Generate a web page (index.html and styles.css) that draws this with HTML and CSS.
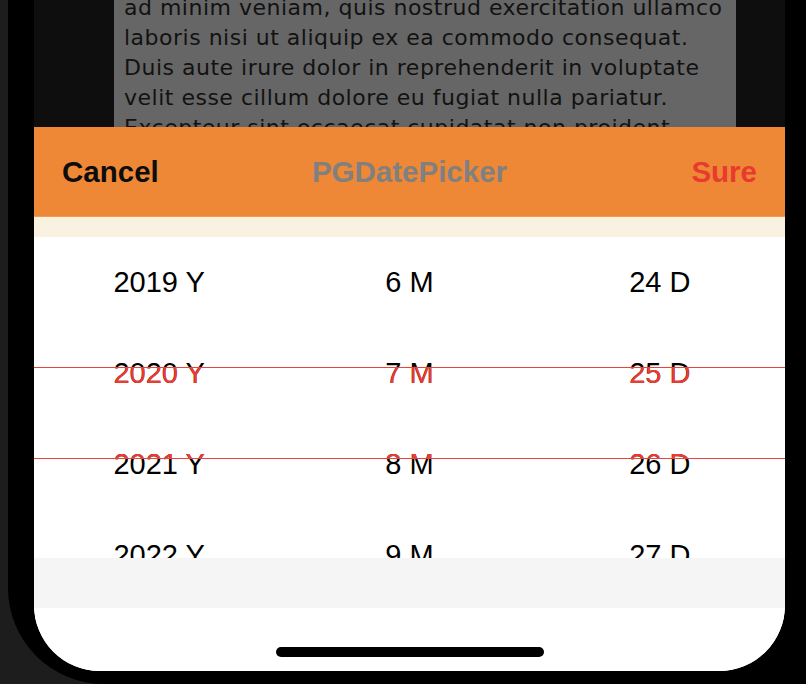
FILE: index.html
```html
<!DOCTYPE html>
<html>
<head>
<meta charset="utf-8">
<link rel="stylesheet" href="styles.css">
</head>
<body>
<div class="device">
  <div class="screen">
    <div class="backdrop">
      <div class="content">
        <p class="lorem">
          <span class="line">ad minim veniam, quis nostrud exercitation ullamco</span>
          <span class="line">laboris nisi ut aliquip ex ea commodo consequat.</span>
          <span class="line">Duis aute irure dolor in reprehenderit in voluptate</span>
          <span class="line">velit esse cillum dolore eu fugiat nulla pariatur.</span>
          <span class="line">Excepteur sint occaecat cupidatat non proident,</span>
        </p>
      </div>
    </div>
    <div class="sheet">
      <div class="toolbar">
        <span class="btn cancel">Cancel</span>
        <span class="title">PGDatePicker</span>
        <span class="btn sure">Sure</span>
      </div>
      <div class="cream"></div>
      <div class="picker">
        <div class="rows">
          <div class="row"><span>2019 Y</span><span>6 M</span><span>24 D</span></div>
          <div class="row"><span>2020 Y</span><span>7 M</span><span>25 D</span></div>
          <div class="row"><span>2021 Y</span><span>8 M</span><span>26 D</span></div>
          <div class="row"><span>2022 Y</span><span>9 M</span><span>27 D</span></div>
        </div>
        <div class="band">
          <div class="rows rows-sel">
            <div class="row"><span>2019 Y</span><span>6 M</span><span>24 D</span></div>
            <div class="row"><span>2020 Y</span><span>7 M</span><span>25 D</span></div>
            <div class="row"><span>2021 Y</span><span>8 M</span><span>26 D</span></div>
            <div class="row"><span>2022 Y</span><span>9 M</span><span>27 D</span></div>
          </div>
        </div>
      </div>
      <div class="graystrip"></div>
      <div class="footer"><div class="home"></div></div>
    </div>
  </div>
</div>
</body>
</html>
```
FILE: styles.css
```css
* { box-sizing: border-box; }
html, body { margin: 0; padding: 0; }
body {
  width: 806px;
  height: 684px;
  overflow: hidden;
  background: #1d1d1d;
  font-family: "Liberation Sans", Arial, sans-serif;
}
.device {
  margin-left: 8px;
  height: 684px;
  background: #000;
  border-bottom-left-radius: 96px;
  padding-left: 26px;
  padding-right: 21px;
}
.screen {
  height: 671px;
  width: 751px;
  border-bottom-left-radius: 66px;
  border-bottom-right-radius: 66px;
  overflow: hidden;
  background: #fff;
  display: flex;
  flex-direction: column;
}
.backdrop {
  height: 127px;
  background: #0e0e0e;
  padding-left: 80px;
  padding-right: 49px;
  overflow: hidden;
}
.content {
  height: 127px;
  background: #666666;
  padding: 0 10px;
  overflow: hidden;
}
.lorem {
  margin: -7px 0 0 0;
  font-family: "DejaVu Sans", "Liberation Sans", sans-serif;
  font-size: 22px;
  line-height: 30px;
  letter-spacing: 0.5px;
  color: #121212;
}
.line {
  display: block;
  white-space: nowrap;
}
.sheet {
  flex: 1;
  display: flex;
  flex-direction: column;
}
.toolbar {
  height: 90px;
  background: #ee8836;
  border-bottom: 1px solid #f29a52;
  display: flex;
  align-items: center;
  justify-content: space-between;
  padding: 0 28px 0 28px;
  font-weight: bold;
  font-size: 29.5px;
  position: relative;
}
.cancel { color: #0d0d0d; }
.sure { color: #e83a2f; }
.title {
  color: #808080;
  position: absolute;
  left: 0;
  right: 0;
  text-align: center;
  pointer-events: none;
}
.cream {
  height: 20px;
  background: #faf2e1;
}
.picker {
  height: 321px;
  background: #fff;
  position: relative;
  overflow: hidden;
}
.rows { color: #000; }
.row {
  height: 91px;
  display: grid;
  grid-template-columns: 1fr 1fr 1fr;
  align-items: center;
  text-align: center;
  font-size: 29px;
  line-height: 91px;
}
.band {
  position: absolute;
  left: 0;
  right: 0;
  top: 130px;
  height: 92px;
  border-top: 1px solid #e8453a;
  border-bottom: 1px solid #e8453a;
  overflow: hidden;
}
.rows-sel {
  color: #ee3b2f;
  margin-top: -131px;
}
.graystrip {
  height: 50px;
  background: #f5f5f5;
}
.footer {
  flex: 1;
  background: #fff;
  display: flex;
  justify-content: center;
  padding-top: 39px;
}
.home {
  width: 268px;
  height: 10px;
  border-radius: 5px;
  background: #000;
}
```
